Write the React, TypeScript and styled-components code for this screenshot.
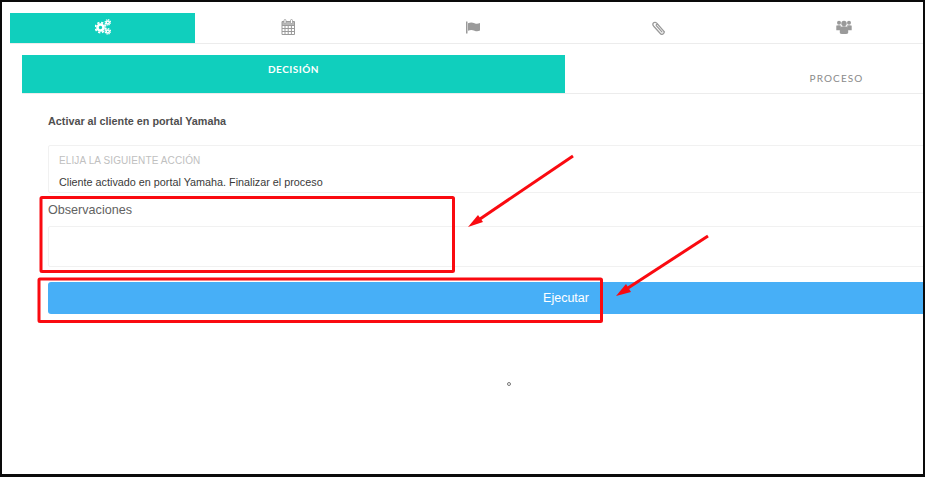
import styled, { createGlobalStyle } from "styled-components";

const Global = createGlobalStyle`
  html, body {
    margin: 0;
    padding: 0;
    background: #fff;
  }
`;

const CogsIcon = () => (
  <TabIcon viewBox="0 0 16 16">
    <g fill="none" stroke="currentColor">
      <circle cx="5.500" cy="8.500" r="3" strokeWidth="2.600" />
      <circle cx="5.500" cy="8.500" r="5" strokeWidth="1.800" strokeDasharray="2.200 1.730" />
      <circle cx="12.800" cy="3.400" r="1.500" strokeWidth="1.500" />
      <circle cx="12.800" cy="3.400" r="2.700" strokeWidth="1.200" strokeDasharray="1.300 0.820" />
      <circle cx="12.800" cy="12.400" r="1.500" strokeWidth="1.500" />
      <circle cx="12.800" cy="12.400" r="2.700" strokeWidth="1.200" strokeDasharray="1.300 0.820" />
    </g>
  </TabIcon>
);

const CalendarIcon = () => (
  <TabIcon viewBox="0 0 16 16">
    <path
      d="M2 2.500h12.500v13H2zM2 6.500h12.500M2 9.500h12.500M2 12.500h12.500M5 6.500v9M8.200 6.500v9M11.400 6.500v9"
      fill="none"
      stroke="currentColor"
      strokeWidth="1"
    />
    <path d="M2 2.500h12.500v3.500H2z" fill="currentColor" opacity="0.7" />
    <rect x="4" y="0.500" width="2" height="4" rx="1" fill="#fff" stroke="currentColor" strokeWidth="0.800" />
    <rect x="10.500" y="0.500" width="2" height="4" rx="1" fill="#fff" stroke="currentColor" strokeWidth="0.800" />
  </TabIcon>
);

const FlagIcon = () => (
  <TabIcon viewBox="0 0 16 16">
    <rect x="1" y="2.500" width="1.500" height="12" fill="currentColor" />
    <path
      d="M3 4.200c2.500-1 4.500-.8 6.500 0s3.500.6 5.500-.2v7.600c-2 .9-3.500 1-5.500.2s-4-1-6.500 0z"
      fill="currentColor"
    />
  </TabIcon>
);

const ClipIcon = () => (
  <TabIcon viewBox="0 0 16 16">
    <path
      d="M13.400 12.900 6 4.400C5 3.200 3.500 3 2.600 3.800S1.700 6 2.700 7.200l6.600 7.300c.8.900 2.100 1 3 .3s1-2 .2-2.900L6.900 5.700c-.4-.5-1-.5-1.400-.2s-.4.900 0 1.400l5.400 6"
      fill="none"
      stroke="currentColor"
      strokeWidth="1.300"
      strokeLinecap="round"
    />
  </TabIcon>
);

const UsersIcon = () => (
  <TabIcon viewBox="0 0 16 16">
    <g fill="currentColor">
      <circle cx="3" cy="3.800" r="2" />
      <circle cx="13" cy="3.800" r="2" />
      <circle cx="8" cy="4.500" r="2.700" />
      <path d="M0.300 6.800C1 6 4.500 6 5 6.800L3.800 11.200H.3zM15.700 6.800C15 6 11.500 6 11 6.800l1.200 4.400h3.500z" />
      <path d="M3.800 9.600c0-1.700 1.300-2.400 4.200-2.400s4.200.7 4.200 2.400v3.900c0 1-1 1.500-4.200 1.500s-4.200-.5-4.200-1.500z" />
    </g>
  </TabIcon>
);

const Icons = [CogsIcon, CalendarIcon, FlagIcon, ClipIcon, UsersIcon];

const App = () => {
  return (
    <Frame>
      <Global />
      <TopTabs>
        {Icons.map((Icon, i) => (
          <TopTab key={i} $active={i === 0}>
            <Icon />
          </TopTab>
        ))}
      </TopTabs>
      <Panel>
        <SubTabs>
          <SubTab $active>DECISIÓN</SubTab>
          <SubTab>PROCESO</SubTab>
        </SubTabs>
        <Form>
          <Title>Activar al cliente en portal Yamaha</Title>
          <ActionBox>
            <ActionLabel>ELIJA LA SIGUIENTE ACCIÓN</ActionLabel>
            <ActionValue>Cliente activado en portal Yamaha. Finalizar el proceso</ActionValue>
          </ActionBox>
          <FieldLabel>Observaciones</FieldLabel>
          <Notes />
          <Submit>Ejecutar</Submit>
        </Form>
      </Panel>
      <Dot />
      <Marks viewBox="0 0 925 477">
        <rect x="41" y="197.500" width="412.500" height="74" rx="1" />
        <rect x="39" y="279" width="562.500" height="42.500" rx="1" />
        <line x1="573" y1="156" x2="480" y2="219" />
        <line x1="708" y1="236" x2="628" y2="288" />
        <ArrowHead points="468,227 478,215 483,222" />
        <ArrowHead points="616,296 626,284 631,292" />
      </Marks>
    </Frame>
  );
};

export default App;

const Frame = styled.div`
  position: relative;
  box-sizing: border-box;
  width: 925px;
  height: 477px;
  padding-top: 11px;
  overflow: hidden;
  background: #fff;
  border: solid #0a0a0a;
  border-width: 2px 2px 3px 2px;
  font-family: "Liberation Sans", Arial, sans-serif;
`;

const TopTabs = styled.div`
  display: flex;
  width: 938px;
  margin-left: 8px;
  border-bottom: 1px solid #ececec;
`;

const TopTab = styled.div<{ $active?: boolean }>`
  flex: 0 0 185.400px;
  height: 30px;
  display: flex;
  align-items: center;
  justify-content: center;
  background: ${(p) => (p.$active ? "#10cfbd" : "transparent")};
  color: ${(p) => (p.$active ? "#fff" : "#9a9a9a")};
`;

const TabIcon = styled.svg`
  display: block;
  width: 16px;
  height: 16px;
  margin-top: -2px;
`;

const Panel = styled.div`
  margin: 11px 0 0 20px;
`;

const SubTabs = styled.div`
  display: flex;
  width: 1086px;
  border-bottom: 1px solid #ececec;
`;

const SubTab = styled.div<{ $active?: boolean }>`
  flex: 0 0 543px;
  height: 38px;
  box-sizing: border-box;
  padding-top: ${(p) => (p.$active ? "7px" : "16px")};
  text-align: center;
  font-family: Lato, sans-serif;
  font-size: 10px;
  line-height: 14px;
  font-weight: ${(p) => (p.$active ? 700 : 400)};
  letter-spacing: ${(p) => (p.$active ? "0.5px" : "1.1px")};
  background: ${(p) => (p.$active ? "#10cfbd" : "transparent")};
  color: ${(p) => (p.$active ? "#fff" : "#8a8a8a")};
`;

const Form = styled.div`
  width: 1036px;
  margin-left: 26px;
  padding-top: 20px;
`;

const Title = styled.div`
  font-size: 10.800px;
  line-height: 14px;
  font-weight: 700;
  color: #4f4f4f;
`;

const ActionBox = styled.div`
  box-sizing: border-box;
  height: 48px;
  margin-top: 17px;
  padding: 8px 10px 0;
  border: 1px solid #f1f1f1;
  border-radius: 2px;
`;

const ActionLabel = styled.div`
  font-size: 10px;
  line-height: 13px;
  letter-spacing: 0.120px;
  color: #c0c0c0;
`;

const ActionValue = styled.div`
  margin-top: 8px;
  font-size: 10.800px;
  line-height: 14px;
  color: #3a3a3a;
`;

const FieldLabel = styled.div`
  margin-top: 9px;
  font-size: 12.600px;
  line-height: 16px;
  color: #626262;
`;

const Notes = styled.div`
  box-sizing: border-box;
  height: 41px;
  margin-top: 8px;
  border: 1px solid #f1f1f1;
  border-radius: 2px;
`;

const Submit = styled.button`
  display: block;
  width: 100%;
  height: 32px;
  margin-top: 15px;
  padding: 0;
  border: 0;
  border-radius: 3px;
  background: #47aff7;
  color: #fff;
  font-family: inherit;
  font-size: 12.500px;
`;

const Dot = styled.span`
  position: absolute;
  left: 505px;
  top: 380px;
  box-sizing: border-box;
  width: 4px;
  height: 4px;
  border: 1px solid #777;
  border-radius: 50%;
`;

const Marks = styled.svg`
  position: absolute;
  left: -2px;
  top: -2px;
  width: 925px;
  height: 477px;
  fill: none;
  stroke: #fa0a10;
  stroke-width: 3px;
`;

const ArrowHead = styled.polygon`
  fill: #fa0a10;
  stroke: none;
`;
